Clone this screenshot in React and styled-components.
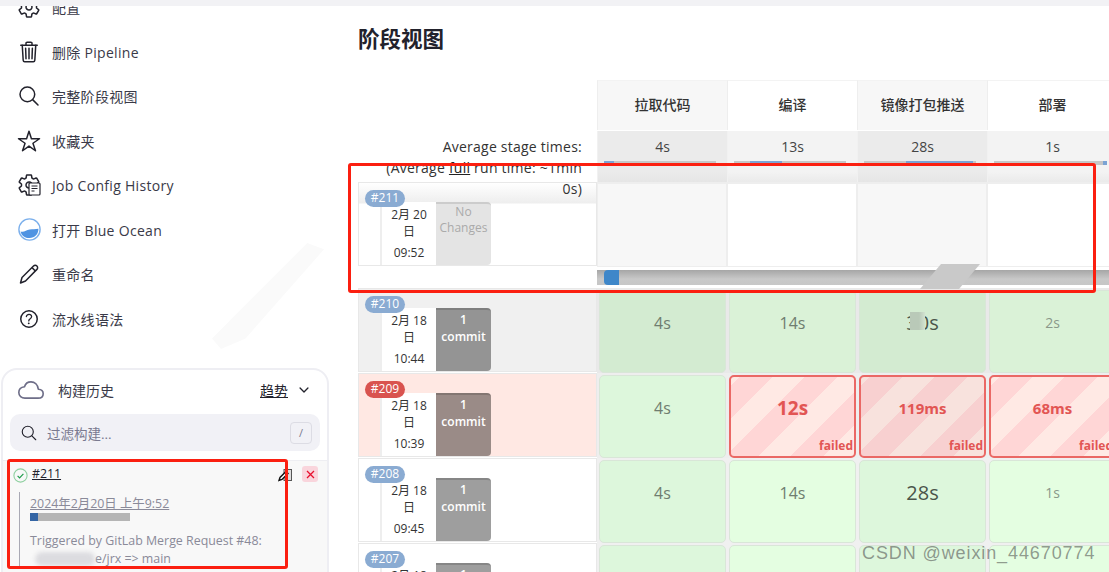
import React from "react";
import styled, { createGlobalStyle, css } from "styled-components";
import {
  IoSettingsOutline,
  IoTrashOutline,
  IoSearchOutline,
  IoStarOutline,
  IoHelpCircleOutline,
  IoCloudOutline,
  IoChevronDown,
} from "react-icons/io5";

const GlobalStyle = createGlobalStyle`
  html, body { margin: 0; padding: 0; background: #fff; }
  body { font-family: "Open Sans", "Noto Sans CJK SC", sans-serif; color: #333; }
`;

const Page = styled.div`
  position: relative;
  width: 1109px;
  height: 572px;
  overflow: hidden;
  background: #fff;
`;

const TopStrip = styled.div`
  position: relative;
  z-index: 2;
  height: 6px;
  background: #f2f2f5;
`;

const Layout = styled.div`
  display: flex;
`;

const Sidebar = styled.aside`
  flex: 0 0 340px;
  margin-top: -21.2px;
`;

const NavList = styled.nav`
  padding-left: 18px;
`;

const NavItem = styled.div`
  display: flex;
  align-items: center;
  gap: 12px;
  height: 44.5px;
  font-size: 14px;
  letter-spacing: 0.3px;
  color: #3a3a48;
`;

const NavIcon = styled.span`
  display: flex;
  flex: 0 0 22px;
  min-width: 0;
  position: relative;
  align-items: center;
  justify-content: center;
  height: 22px;
  font-size: 24px;
  color: #22222c;
  svg { flex: none; }
`;

const HistoryCard = styled.section`
  margin: 27.2px 0 0 1px;
  width: 328px;
  height: 240px;
  border: 2px solid #eeeef3;
  border-radius: 16px;
  box-sizing: border-box;
  overflow: hidden;
`;

const HistoryHead = styled.div`
  display: flex;
  align-items: center;
  height: 40px;
  padding: 0 16px 4px 15px;
  font-size: 14px;
  color: #3a3a48;
`;

const CloudIcon = styled(IoCloudOutline)`
  font-size: 26px;
  color: #6e6e88;
  margin-right: 14px;
`;

const TrendLink = styled.a`
  margin-left: auto;
  margin-right: 9px;
  color: #22222c;
  text-decoration: underline;
`;

const SearchBox = styled.div`
  display: flex;
  align-items: center;
  margin: 0 7px;
  height: 37px;
  padding: 0 8px 0 10px;
  border-radius: 10px;
  background: #f1f1f6;
  font-size: 13.5px;
  color: #7a7a90;
`;

const SearchLabel = styled.span`
  margin-left: 9px;
  flex: 1;
`;

const KeyHint = styled.kbd`
  display: flex;
  align-items: center;
  justify-content: center;
  width: 20px;
  height: 20px;
  border: 1px solid #dcdce4;
  border-radius: 4px;
  font-family: inherit;
  font-size: 11px;
`;

const BuildRow = styled.div`
  position: relative;
  margin-top: 9px;
  height: 120px;
  border-top: 1px solid #eeeef2;
  background: #f8f8f8;
`;

const BuildTitle = styled.div`
  display: flex;
  align-items: center;
  gap: 4px;
  padding-left: 10px;
  height: 24px;
  font-size: 12.3px;
  svg { margin-top: 4px; }
`;

const BuildLink = styled.a`
  color: #22222c;
  text-decoration: underline;
`;

const BuildActions = styled.div`
  position: absolute;
  top: 5px;
  right: 9px;
  display: flex;
  align-items: center;
  gap: 9px;
`;

const DeleteButton = styled.span`
  display: flex;
  align-items: center;
  justify-content: center;
  width: 16px;
  height: 16px;
  border-radius: 3px;
  background: #f9d5dc;
`;

const BuildDetails = styled.div`
  margin: 7px 0 0 16px;
  padding-left: 10px;
  height: 74px;
  border-left: 1px solid #a9a9b4;
  font-size: 12.4px;
  color: #8a8a99;
  line-height: 18px;
`;

const BuildTime = styled.a`
  display: inline-block;
  margin-top: 3px;
  text-decoration: underline;
`;

const BuildProgress = styled.div`
  width: 100px;
  height: 8px;
  margin: 0 0 11px;
  background: linear-gradient(to right, #3465a4 8px, #b5b5b5 8px);
`;

const Blurred = styled.span`
  display: inline-block;
  width: 60px;
  height: 14px;
  margin: 0 0 -3px 5px;
  border-radius: 7px;
  background: #dcdce0;
  filter: blur(2px);
`;

const Main = styled.main`
  flex: 1;
  padding-left: 18px;
  min-width: 0;
`;

const Title = styled.h2`
  margin: 0;
  height: 74px;
  padding-top: 18px;
  box-sizing: border-box;
  font-size: 21.5px;
  line-height: 30px;
  font-weight: 700;
  color: #22222c;
`;

const StageRow = styled.div`
  display: grid;
  grid-template-columns: 239px repeat(4, 130px);
  height: ${(p) => p.$height}px;
`;

const HeadCell = styled.div`
  display: flex;
  align-items: center;
  justify-content: center;
  padding-bottom: 3px;
  box-sizing: border-box;
  border-left: 1px solid #eee;
  border-top: 1px solid #f3f3f3;
  margin-bottom: 1px;
  font-size: 14px;
  font-weight: 500;
  color: #333;
  background: ${(p) => (p.$odd ? "#f7f7f7" : "#fff")};
`;

const AvgLabel = styled.div`
  position: relative;
  z-index: 1;
  padding: 5px 15px 0 0;
  font-size: 14px;
  letter-spacing: 0.24px;
  line-height: 21px;
  text-align: right;
  color: #333;
  a { color: #222; text-decoration: underline; }
`;

const AvgCell = styled.div`
  padding-top: 6px;
  box-sizing: border-box;
  border-left: 1px solid #f1f1f1;
  font-size: 14px;
  line-height: 20px;
  text-align: center;
  color: #444;
  background: linear-gradient(
    to bottom,
    ${(p) => (p.$odd ? "#ebebeb" : "#f3f3f3")} 60%,
    #dcdcdc 100%
  );
`;

const AvgBar = styled.div`
  position: relative;
  height: 4px;
  margin: 4px 11px 0 6px;
  background: #c6c6c6;
`;

const AvgFill = styled.div`
  position: absolute;
  top: 0;
  bottom: 0;
  background: #7ba3d4;
`;

const BuildCell = styled.div`
  position: relative;
  margin-bottom: 2px;
  border: 1px solid #e8e8e8;
  box-sizing: border-box;
  background: ${(p) => p.$bg};
  ${(p) =>
    p.$fade &&
    css`
      background: linear-gradient(to bottom, #fff 0, #eeeeee 20px, #fff 21px);
    `}
`;

const BuildBadge = styled.span`
  position: absolute;
  top: 7px;
  left: 6px;
  width: 40px;
  height: 17px;
  border-radius: 9px;
  font-size: 12px;
  line-height: 16px;
  text-align: center;
  color: #fff;
  background: ${(p) => (p.$failed ? "#d9534f" : "#8aabd2")};
`;

const BuildInfo = styled.div`
  display: flex;
  margin: 19px 0 0 21px;
  height: 63px;
`;

const DateBox = styled.div`
  width: 56px;
  padding: 4px 5px 0;
  box-sizing: border-box;
  border-left: 2px solid #eee;
  background: #fff;
  font-size: 12px;
  line-height: 17px;
  text-align: center;
  color: #333;
`;

const DateTime = styled.div`
  margin-top: 4px;
`;

const ChangesBox = styled.div`
  width: 55px;
  padding-top: ${(p) => (p.$empty ? 0 : 1)}px;
  box-sizing: border-box;
  border-top: 2px solid ${(p) => (p.$empty ? "#ccc" : "rgba(0,0,0,.15)")};
  border-radius: 0 4px 4px 0;
  font-size: 12px;
  line-height: ${(p) => (p.$empty ? 16 : 17)}px;
  text-align: center;
  font-weight: ${(p) => (p.$empty ? 400 : 600)};
  color: ${(p) => (p.$empty ? "#aaa" : "#fff")};
  background: ${(p) => p.$bg};
`;

const BlankCell = styled.div`
  margin-bottom: 1px;
  border: 1px solid #eee;
  border-width: 2px 1px 1px;
  box-sizing: border-box;
  background: ${(p) => (p.$odd ? "#f7f7f7" : "#fff")};
`;

const ScrollSpacer = styled.div``;

const ScrollTrack = styled.div`
  grid-column: span 4;
  margin-top: 3px;
  height: 15px;
  background: linear-gradient(to bottom, #a6a6a6, #c8c8c8 60%, #c6c6c6);
  padding-left: 7px;
`;

const ScrollThumb = styled.div`
  width: 15px;
  height: 15px;
  border-radius: 4px 0 0 4px;
  background: #3f87c9;
`;

const StageWrap = styled.div`
  padding: 2px 1px 1px 2px;
  background: ${(p) => p.$bg};
`;

const StageCell = styled.div`
  position: relative;
  height: 100%;
  padding-top: 20px;
  box-sizing: border-box;
  border: 1px solid #d9e6d8;
  border-radius: 5px;
  text-align: center;
  line-height: 24px;
  font-size: ${(p) => p.$size}px;
  color: ${(p) => p.$color};
  background: ${(p) => p.$bg};
  ${(p) =>
    p.$failed &&
    css`
      padding-top: 19px;
      border: 2px solid #ea6865;
      font-weight: 700;
      background: repeating-linear-gradient(
        135deg,
        ${p.$bg} -17px,
        ${p.$bg} 6px,
        ${p.$stripe} 6px,
        ${p.$stripe} 29px
      );
    `}
`;

const FailedTag = styled.span`
  position: absolute;
  right: 1px;
  bottom: 3px;
  font-size: 12px;
  line-height: 14px;
  font-weight: 700;
  color: #e25553;
`;

const Annotation = styled.div`
  position: absolute;
  z-index: 5;
  left: ${(p) => p.$x}px;
  top: ${(p) => p.$y}px;
  width: ${(p) => p.$w}px;
  height: ${(p) => p.$h}px;
  box-sizing: border-box;
  border: 3px solid #fb1f10;
  border-radius: 3px;
`;

const Watermark = styled.div`
  position: absolute;
  z-index: 6;
  left: 862px;
  top: 540px;
  font-family: "Liberation Sans", sans-serif;
  font-size: 18px;
  line-height: 26px;
  letter-spacing: 0.9px;
  color: rgba(70, 70, 70, 0.55);
`;

const ShearPatch = styled.div`
  position: absolute;
  z-index: 4;
  left: 920px;
  top: 264px;
  width: 60px;
  height: 25px;
  background: #c9c9c9;
  clip-path: polygon(35% 0, 100% 0, 65% 100%, 0 100%);
`;

const DigitPatch = styled.div`
  position: absolute;
  z-index: 4;
  left: 910px;
  top: 312px;
  width: 15px;
  height: 18px;
  background: linear-gradient(to right, #b9c9b8 60%, #d2e2d0);
`;

const SidebarSmudge = styled.div`
  position: absolute;
  z-index: 1;
  left: 212px;
  top: 243px;
  width: 112px;
  height: 106px;
  background: #fafafa;
  clip-path: polygon(85% 0, 100% 6%, 30% 90%, 8% 100%, 0 90%);
`;

const WaveIcon = () => (
  <svg width="23" height="23" viewBox="0 0 23 23">
    <circle cx="11.5" cy="11.5" r="10.6" fill="#fff" stroke="#7cb0ec" strokeWidth="1.4" />
    <path d="M2.6 13.4c3.2 1.4 5.6-1.7 9-1.9 3.4-.2 5.6-.4 8.8-.7.3 5-3.6 9.3-8.9 9.3-4.7 0-8.4-3-8.9-6.7z" fill="#4f93e2" />
  </svg>
);

const ConfigIcon = () => (
  <>
    <IoSettingsOutline />
    <svg
      width="13"
      height="14"
      viewBox="0 0 13 14"
      style={{ position: "absolute", right: -1, bottom: 0 }}
    >
      <rect x="1" y="1" width="11" height="12" rx="1" fill="#fff" stroke="#22222c" strokeWidth="1.2" />
      <path d="M3.5 4h6M3.5 6.5h6M3.5 9h3" stroke="#22222c" strokeWidth="1" />
    </svg>
  </>
);

const PencilIcon = () => (
  <svg width="22" height="22" viewBox="0 0 22 22" fill="none" stroke="#22222c" strokeWidth="1.5" strokeLinejoin="round">
    <path d="M2.5 20l1.5-5.5L15.5 3a2.3 2.3 0 0 1 3.4 3.4L7.5 18z" />
    <path d="M14 4.6l3.4 3.4" />
  </svg>
);

const navItems = [
  { label: "配置", icon: <IoSettingsOutline /> },
  { label: "删除 Pipeline", icon: <IoTrashOutline /> },
  { label: "完整阶段视图", icon: <IoSearchOutline /> },
  { label: "收藏夹", icon: <IoStarOutline /> },
  { label: "Job Config History", icon: <ConfigIcon /> },
  { label: "打开 Blue Ocean", icon: <WaveIcon /> },
  { label: "重命名", icon: <PencilIcon /> },
  { label: "流水线语法", icon: <IoHelpCircleOutline /> },
];

const stages = ["拉取代码", "编译", "镜像打包推送", "部署"];
const averages = [
  { time: "4s", left: 0, width: 10 },
  { time: "13s", left: 16, width: 32 },
  { time: "28s", left: 42, width: 67 },
  { time: "1s", left: 109, width: 4 },
];

const GREEN = "#6f7d6f";

const builds = [
  {
    id: "#210",
    date: "2月 18 日",
    time: "10:44",
    rowBg: "#f0f0f0",
    box: "#949494",
    wrap: "#e9e9e9",
    cells: [
      { t: "4s", size: 16, color: GREEN, bg: "#d3ebd1" },
      { t: "14s", size: 16, color: GREEN, bg: "#daf2d7" },
      { t: "30s", size: 20, color: "#4a554a", bg: "#d3ebd1" },
      { t: "2s", size: 14, color: "#8a988a", bg: "#daf2d7" },
    ],
  },
  {
    id: "#209",
    date: "2月 18 日",
    time: "10:39",
    failed: true,
    rowBg: "#ffe8e3",
    box: "#9a8b87",
    wrap: "#eeeeee",
    cells: [
      { t: "4s", size: 16, color: GREEN, bg: "#ddf7dc" },
      { t: "12s", size: 19, fail: true, bg: "#ffe9e4", stripe: "#ffd6d6" },
      { t: "119ms", size: 15, fail: true, bg: "#f8e2dd", stripe: "#f8d0d0" },
      { t: "68ms", size: 15, fail: true, bg: "#ffe9e4", stripe: "#ffd6d6" },
    ],
  },
  {
    id: "#208",
    date: "2月 18 日",
    time: "09:45",
    rowBg: "#fff",
    box: "#9e9e9e",
    wrap: "#f0f0f0",
    cells: [
      { t: "4s", size: 16, color: GREEN, bg: "#ddf7dc" },
      { t: "14s", size: 16, color: GREEN, bg: "#e4fee1" },
      { t: "28s", size: 20, color: "#4a554a", bg: "#ddf7dc" },
      { t: "1s", size: 14, color: "#8a988a", bg: "#e4fee1" },
    ],
  },
  {
    id: "#207",
    date: "2月 18 日",
    time: "09:40",
    rowBg: "#fff",
    box: "#9e9e9e",
    wrap: "#f0f0f0",
    cells: [
      { t: "", size: 16, color: GREEN, bg: "#ddf7dc" },
      { t: "", size: 16, color: GREEN, bg: "#e4fee1" },
      { t: "", size: 16, color: GREEN, bg: "#ddf7dc" },
      { t: "", size: 16, color: GREEN, bg: "#e4fee1" },
    ],
  },
];

function BuildSummary({ id, date, time, failed, empty, box, bg, fade }) {
  return (
    <BuildCell $bg={bg} $fade={fade}>
      <BuildBadge $failed={failed}>{id}</BuildBadge>
      <BuildInfo>
        <DateBox>
          {date}
          <DateTime>{time}</DateTime>
        </DateBox>
        <ChangesBox $bg={box} $empty={empty}>
          {empty ? (
            <>
              No
              <br />
              Changes
            </>
          ) : (
            <>
              1
              <br />
              commit
            </>
          )}
        </ChangesBox>
      </BuildInfo>
    </BuildCell>
  );
}

export default function App() {
  return (
    <Page>
      <GlobalStyle />
      <TopStrip />
      <SidebarSmudge />
      <Layout>
        <Sidebar>
          <NavList>
            {navItems.map((item) => (
              <NavItem key={item.label}>
                <NavIcon>{item.icon}</NavIcon>
                {item.label}
              </NavItem>
            ))}
          </NavList>
          <HistoryCard>
            <HistoryHead>
              <CloudIcon />
              构建历史
              <TrendLink>趋势</TrendLink>
              <IoChevronDown size={14} color="#22222c" />
            </HistoryHead>
            <SearchBox>
              <IoSearchOutline size={18} color="#22222c" />
              <SearchLabel>过滤构建...</SearchLabel>
              <KeyHint>/</KeyHint>
            </SearchBox>
            <BuildRow>
              <BuildTitle>
                <svg width="15" height="15" viewBox="0 0 15 15">
                  <circle cx="7.5" cy="7.5" r="6.6" fill="none" stroke="#8fd0a0" strokeWidth="1.1" />
                  <path d="M4.6 7.8l2 2 3.8-4" fill="none" stroke="#1e9b4a" strokeWidth="1.2" />
                </svg>
                <BuildLink>#211</BuildLink>
              </BuildTitle>
              <BuildActions>
                <svg width="15" height="15" viewBox="0 0 15 15">
                  <rect x="6" y="2.5" width="7.5" height="11" fill="#ddd" stroke="#555" strokeWidth="1" />
                  <path d="M1 13.5l1-3 6-6 2 2-6 6z" fill="#fff" stroke="#111" strokeWidth="1.4" />
                </svg>
                <DeleteButton>
                  <svg width="9" height="9" viewBox="0 0 9 9">
                    <path d="M1 1l7 7M8 1l-7 7" stroke="#e8102e" strokeWidth="1.3" />
                  </svg>
                </DeleteButton>
              </BuildActions>
              <BuildDetails>
                <BuildTime>2024年2月20日 上午9:52</BuildTime>
                <BuildProgress />
                Triggered by GitLab Merge Request #48:
                <br />
                <Blurred />e/jrx =&gt; main
              </BuildDetails>
            </BuildRow>
          </HistoryCard>
        </Sidebar>
        <Main>
          <Title>阶段视图</Title>
          <StageRow $height={51}>
            <div />
            {stages.map((name, i) => (
              <HeadCell key={name} $odd={i % 2 === 0}>
                {name}
              </HeadCell>
            ))}
          </StageRow>
          <StageRow $height={51}>
            <AvgLabel>
              Average stage times:
              <br />
              (Average <a>full</a> run time: ~1min
              <br />
              0s)
            </AvgLabel>
            {averages.map((avg, i) => (
              <AvgCell key={avg.time} $odd={i % 2 === 0}>
                {avg.time}
                <AvgBar>
                  <AvgFill style={{ left: avg.left, width: avg.width }} />
                </AvgBar>
              </AvgCell>
            ))}
          </StageRow>
          <StageRow $height={85}>
            <BuildSummary
              id="#211"
              date="2月 20 日"
              time="09:52"
              empty
              box="#e4e4e4"
              bg="#fff"
              fade
            />
            {stages.map((name, i) => (
              <BlankCell key={name} $odd={i % 2 === 0} />
            ))}
          </StageRow>
          <StageRow $height={21}>
            <ScrollSpacer />
            <ScrollTrack>
              <ScrollThumb />
            </ScrollTrack>
          </StageRow>
          {builds.map((b) => (
            <StageRow key={b.id} $height={85}>
              <BuildSummary
                id={b.id}
                date={b.date}
                time={b.time}
                failed={b.failed}
                box={b.box}
                bg={b.rowBg}
              />
              {b.cells.map((c, i) => (
                <StageWrap key={i} $bg={b.wrap}>
                  <StageCell
                    $size={c.size}
                    $color={c.fail ? "#e25553" : c.color}
                    $bg={c.bg}
                    $failed={c.fail}
                    $stripe={c.stripe}
                  >
                    {c.t}
                    {c.fail && <FailedTag>failed</FailedTag>}
                  </StageCell>
                </StageWrap>
              ))}
            </StageRow>
          ))}
        </Main>
      </Layout>
      <ShearPatch />
      <DigitPatch />
      <Annotation $x={348} $y={163} $w={748} $h={130} />
      <Annotation $x={7} $y={459} $w={281} $h={110} />
      <Watermark>CSDN @weixin_44670774</Watermark>
    </Page>
  );
}
